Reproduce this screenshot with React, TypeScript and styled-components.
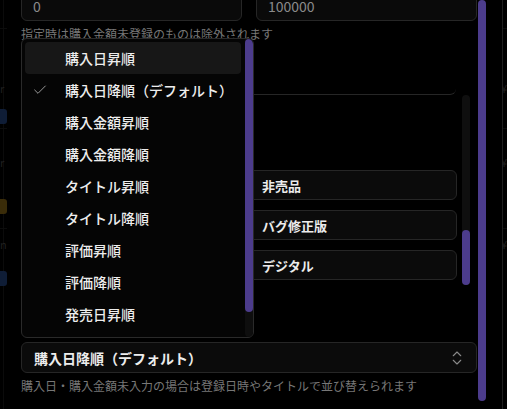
import styled, { createGlobalStyle } from "styled-components";
import { Check, ChevronsUpDown } from "lucide-react";

const GlobalStyle = createGlobalStyle`
  html, body {
    margin: 0;
    padding: 0;
    background: #000;
  }
  body {
    font-family: "Noto Sans CJK JP", "Noto Sans", sans-serif;
  }
  * {
    box-sizing: border-box;
  }
`;

const purple = "#4c3c8c";

const Screen = styled.div`
  position: relative;
  width: 507px;
  height: 409px;
  overflow: hidden;
  background: #000;
`;

/* page behind the dialog, only its edges show */
const Page = styled.div`
  height: 100%;
  padding-top: 28px;
  background: linear-gradient(to right, transparent 3px, #151515 3px, #151515 4px, transparent 4px);
`;

const PageRow = styled.div<{ $pad: number }>`
  height: 100px;
  border-top: 1px solid #161616;
  display: flex;
  justify-content: space-between;
  padding-top: ${(p) => p.$pad}px;
`;

const PageCell = styled.div<{ $gap: number }>`
  display: flex;
  flex-direction: column;
  gap: ${(p) => p.$gap}px;
`;

const Meta = styled.span`
  font-size: 11px;
  line-height: 14px;
  color: #3a3a3a;
`;

const Badge = styled.span<{ $tone: "blue" | "gold" }>`
  width: 7px;
  height: 15px;
  border-radius: 0 3px 3px 0;
  background: ${(p) => (p.$tone === "blue" ? "#1d3563" : "#6a5012")};
`;

const Dim = styled.div`
  position: absolute;
  inset: 0;
  background: rgba(0, 0, 0, 0.45);
`;

const Dialog = styled.div`
  position: absolute;
  top: 0;
  bottom: 0;
  left: 7px;
  width: 496px;
  background: #000;
  border-right: 1px solid #1f1f1f;
  display: flex;
  align-items: flex-start;
  padding-left: 14px;
`;

const Body = styled.div<{ $scroll: number }>`
  width: 456px;
  margin-top: -${(p) => p.$scroll}px;
  display: flex;
  flex-direction: column;
`;

const OuterScrollbar = styled.div`
  width: 8px;
  height: 401px;
  margin-left: 1px;
  border-radius: 4px;
  background: ${purple};
`;

const InputRow = styled.div`
  display: grid;
  grid-template-columns: 1fr 1fr;
  gap: 14px;
`;

const Input = styled.input`
  height: 30px;
  width: 100%;
  border: 1px solid #262626;
  border-radius: 6px;
  background: #0a0a0a;
  padding: 0 11px;
  color: #8a8a8a;
  font-family: inherit;
  font-size: 14px;
  outline: none;
`;

const Hint = styled.p`
  margin: 5px 0 0;
  font-size: 12px;
  line-height: 16px;
  color: #777;
  white-space: nowrap;
`;

const PanelHeader = styled.div`
  height: 53px;
  width: 435px;
  border-bottom: 1px solid #262626;
  border-bottom-right-radius: 6px;
`;

const PanelBody = styled.div`
  height: 190px;
  display: flex;
  gap: 5px;
`;

const ToggleList = styled.div`
  width: 436px;
  overflow: hidden;
  padding-top: 75px;
`;

const ToggleGrid = styled.div`
  display: grid;
  grid-template-columns: 1fr 1fr;
  gap: 10px;
`;

const Toggle = styled.div`
  height: 30px;
  border: 1px solid #262626;
  border-radius: 6px;
  background: #0b0b0b;
  display: flex;
  align-items: center;
  padding-left: 17px;
  font-size: 13px;
  font-weight: 700;
  color: #ececec;
`;

const Track = styled.div`
  width: 8px;
  height: 100%;
  border-radius: 4px;
  background: #0f0f0f;
  display: flex;
  flex-direction: column;
  justify-content: flex-end;
`;

const Thumb = styled.div<{ $size: number }>`
  height: ${(p) => p.$size}px;
  border-radius: 4px;
  background: ${purple};
`;

const SelectWrap = styled.div`
  position: relative;
  margin-top: 57px;
`;

const SelectButton = styled.div`
  height: 31px;
  border: 1px solid #262626;
  border-radius: 6px;
  background: #0b0b0b;
  display: flex;
  align-items: center;
  justify-content: space-between;
  padding: 0 10px 0 12px;
  font-size: 14px;
  font-weight: 700;
  color: #ededed;
`;

const Listbox = styled.div`
  position: absolute;
  left: 0;
  bottom: calc(100% + 4px);
  width: 233px;
  height: 300px;
  background: #050505;
  border: 1px solid #2a2a2a;
  border-radius: 6px;
  overflow: hidden;
  display: flex;
`;

const Options = styled.div`
  width: 219px;
  padding: 3px 0 0 3px;
  display: flex;
  flex-direction: column;
  overflow: hidden;
`;

const Option = styled.div<{ $active?: boolean }>`
  flex: none;
  height: 32px;
  display: flex;
  align-items: center;
  border-radius: 4px;
  background: ${(p) => (p.$active ? "#171717" : "transparent")};
  font-size: 14px;
  font-weight: 500;
  color: #ededed;
  white-space: nowrap;
`;

const IconSlot = styled.span`
  width: 40px;
  padding-left: 7px;
  display: flex;
  align-items: center;
  color: #9a9a9a;
`;

const ListScroll = styled.div`
  margin-left: 4px;
  width: 8px;
  height: 100%;
  background: #0e0e0e;
  border-radius: 0 0 4px 4px;
`;

const ListThumb = styled.div`
  height: 273px;
  border-radius: 4px;
  background: ${purple};
`;

const sortOptions = [
  "購入日昇順",
  "購入日降順（デフォルト）",
  "購入金額昇順",
  "購入金額降順",
  "タイトル昇順",
  "タイトル降順",
  "評価昇順",
  "評価降順",
  "発売日昇順",
];

const toggles = ["", "非売品", "", "バグ修正版", "", "デジタル"];

const pageRows = [
  { pad: 52, gap: 14, tone: "blue" as const, meta: "r" },
  { pad: 26, gap: 30, tone: "gold" as const, meta: "r" },
  { pad: 8, gap: 20, tone: "blue" as const, meta: "n" },
];

export default function App() {
  const selected = 1;
  return (
    <>
      <GlobalStyle />
      <Screen>
        <Page>
          {pageRows.map((r, i) => (
            <PageRow key={i} $pad={r.pad}>
              <PageCell $gap={r.gap}>
                <Meta>{r.meta}</Meta>
                <Badge $tone={r.tone} />
              </PageCell>
              <PageCell $gap={0}>
                <Meta>¥</Meta>
              </PageCell>
            </PageRow>
          ))}
        </Page>
        <Dim />
        <Dialog>
          <Body $scroll={9}>
            <InputRow>
              <Input readOnly value="0" />
              <Input readOnly value="100000" />
            </InputRow>
            <Hint>指定時は購入金額未登録のものは除外されます</Hint>

            <PanelHeader />
            <PanelBody>
              <ToggleList>
                <ToggleGrid>
                  {toggles.map((t, i) => (
                    <Toggle key={i}>{t}</Toggle>
                  ))}
                </ToggleGrid>
              </ToggleList>
              <Track>
                <Thumb $size={55} />
              </Track>
            </PanelBody>

            <SelectWrap>
              <Listbox>
                <Options>
                  {sortOptions.map((o, i) => (
                    <Option key={o} $active={i === 0}>
                      <IconSlot>
                        {i === selected && <Check size={16} strokeWidth={1.5} />}
                      </IconSlot>
                      {o}
                    </Option>
                  ))}
                </Options>
                <ListScroll>
                  <ListThumb />
                </ListScroll>
              </Listbox>
              <SelectButton>
                {sortOptions[selected]}
                <ChevronsUpDown size={18} strokeWidth={1.5} color="#8a8a8a" />
              </SelectButton>
            </SelectWrap>
            <Hint>購入日・購入金額未入力の場合は登録日時やタイトルで並び替えられます</Hint>
          </Body>
          <OuterScrollbar />
        </Dialog>
      </Screen>
    </>
  );
}
